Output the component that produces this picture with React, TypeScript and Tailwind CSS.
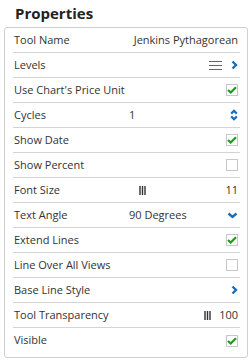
import type { ReactNode } from "react";

type Row = {
  label: string;
  value?: ReactNode;
  control?: ReactNode;
};

const ChevronRight = () => (
  <svg width="7" height="10" viewBox="0 0 7 10" className="shrink-0">
    <path d="M1.5 1.5 L5 5 L1.5 8.5" fill="none" stroke="#1a6fba" strokeWidth="2.4" />
  </svg>
);

const ChevronDown = () => (
  <svg width="11" height="7" viewBox="0 0 11 7" className="shrink-0">
    <path d="M1.5 1.5 L5.5 5 L9.5 1.5" fill="none" stroke="#1a6fba" strokeWidth="2.4" />
  </svg>
);

const Spinner = () => (
  <svg width="8" height="12" viewBox="0 0 8 12" className="shrink-0">
    <path d="M1.2 4.6 L4 1.8 L6.8 4.6 M1.2 7.4 L4 10.2 L6.8 7.4" fill="none" stroke="#1a6fba" strokeWidth="2.2" />
  </svg>
);

const Lines = () => (
  <svg width="13" height="9" viewBox="0 0 13 9" className="shrink-0">
    <path d="M0 0.5 H13 M0 4.5 H13 M0 8.5 H13" stroke="#666" strokeWidth="1" />
  </svg>
);

const Bars = () => (
  <svg width="7" height="9" viewBox="0 0 7 9" className="shrink-0">
    <path d="M1 0 V9 M3.5 0 V9 M6 0 V9" stroke="#333" strokeWidth="1.4" />
  </svg>
);

const Check = ({ on }: { on: boolean }) => (
  <span className="flex size-[12px] shrink-0 items-center justify-center border border-[#c8c8c8] bg-white">
    {on && (
      <svg width="10" height="8" viewBox="0 0 10 8">
        <path d="M1 4 L3.7 6.5 L9 1.2" fill="none" stroke="#1e9a1e" strokeWidth="2.2" />
      </svg>
    )}
  </span>
);

const ROWS: Row[] = [
  { label: "Tool Name", value: <span className="flex-1 whitespace-nowrap text-right">Jenkins Pythagorean</span> },
  {
    label: "Levels",
    control: (
      <div className="flex items-center gap-[9px]">
        <Lines />
        <ChevronRight />
      </div>
    ),
  },
  { label: "Use Chart's Price Unit", control: <Check on /> },
  { label: "Cycles", value: <span className="flex-1">1</span>, control: <Spinner /> },
  { label: "Show Date", control: <Check on /> },
  { label: "Show Percent", control: <Check on={false} /> },
  {
    label: "Font Size",
    value: (
      <div className="flex flex-1 items-center justify-between pl-[10px]">
        <Bars />
        <span>11</span>
      </div>
    ),
  },
  { label: "Text Angle", value: <span className="flex-1">90 Degrees</span>, control: <ChevronDown /> },
  { label: "Extend Lines", control: <Check on /> },
  { label: "Line Over All Views", control: <Check on={false} /> },
  { label: "Base Line Style", control: <ChevronRight /> },
  {
    label: "Tool Transparency",
    value: (
      <div className="flex flex-1 items-center justify-end gap-[8px]">
        <Bars />
        <span>100</span>
      </div>
    ),
  },
  { label: "Visible", control: <Check on /> },
];

export default function App() {
  return (
    <div className="h-[361px] w-[252px] bg-white px-[4px] pt-[3px] font-['Open_Sans',sans-serif] text-[#333]">
      <h1 className="pl-[11px] text-[15px] font-bold leading-[20px] text-[#222]">Properties</h1>
      <div className="mt-[4px] rounded-[3px] border border-[#cfcfcf] pb-[4px] pl-[8px] pr-[7px]">
        {ROWS.map((row, i) => (
          <div
            key={row.label}
            className={`flex h-[25px] items-center pl-[1px] pr-[2px] text-[11px] ${
              i < ROWS.length - 1 ? "border-b border-[#d4d4d4]" : ""
            }`}
          >
            <span className="w-[115px] shrink-0 whitespace-nowrap">{row.label}</span>
            {row.value ?? <span className="flex-1" />}
            {row.control}
          </div>
        ))}
      </div>
    </div>
  );
}
